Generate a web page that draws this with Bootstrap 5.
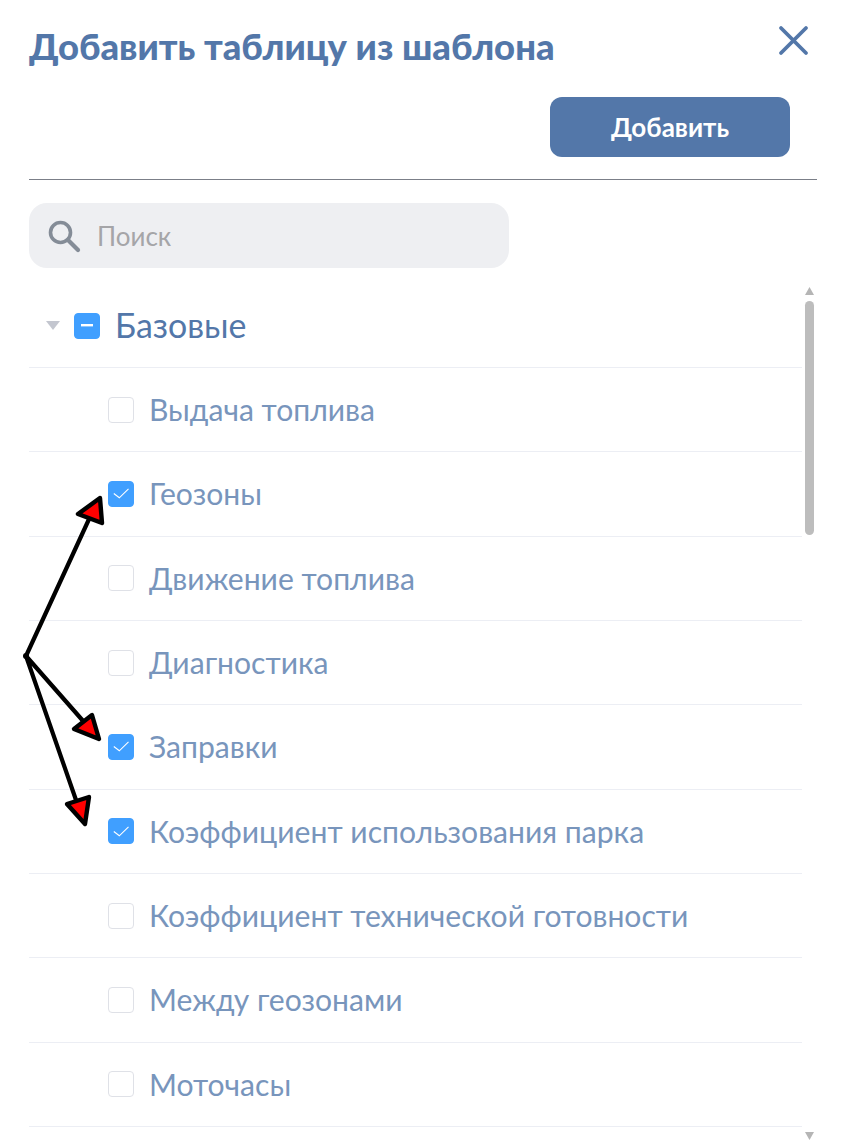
<!DOCTYPE html>
<html lang="ru">
<head>
  <meta charset="UTF-8" />
  <meta name="viewport" content="width=device-width, initial-scale=1.0"/>
  <title>Добавить таблицу из шаблона</title>
  <link href="https://cdn.jsdelivr.net/npm/bootstrap@5.3.0/dist/css/bootstrap.min.css" rel="stylesheet">
  <style>
    html, body { height: 1140px; overflow: hidden; }
    body { font-family: Lato, "Open Sans", sans-serif; background: #fff; position: relative; }
    .panel-wrap { padding: 0 30px 0 29px; }
    .head-row { height: 97px; }
    .panel-title { font-size: 36.4px; font-weight: 900; color: #5377a9; line-height: 1; margin: 28px 0 0; }
    .close-x { margin-top: 25px; margin-right: 7px; width: 32px; height: 32px; background: none; border: 0; padding: 0; }
    .add-row { padding-right: 27px; }
    .btn-add { width: 240px; height: 60px; background: #5377a9; color: #fff; font-size: 26px; font-weight: 700; border: 0; border-radius: 12px; padding: 0; }
    .sep-line { height: 1px; background: #7b7f88; margin: 22px 0 23px; }
    .search-box { width: 480px; height: 65px; background: #eeeff2; border-radius: 18px; padding-left: 18px; }
    .search-text { font-size: 26px; color: #a5a5a8; margin-left: 16px; padding-top: 2px; }
    .tree { margin-top: 16px; width: 773px; }
    .tree-row { height: 84.33px; border-bottom: 1px solid #eceef4; }
    .tree-row.parent { height: 84px; font-size: 33.9px; color: #5377a9; padding-left: 17px; }
    .tree-row.child { font-size: 30.1px; color: #7895bc; padding-left: 79px; }
    .caret-down { width: 0; height: 0; border-left: 7px solid transparent; border-right: 7px solid transparent; border-top: 9px solid #c3c6cf; margin-right: 14px; }
    .box { width: 26px; height: 26px; border-radius: 4px; border: 1px solid #dfe1e7; background: #fff; flex: none; margin-right: 15px; }
    .box.on { background: #409fff; border-color: #409fff; }
    .scroll-track { position: absolute; left: 805px; top: 287px; width: 9px; height: 853px; }
    .scroll-thumb { position: absolute; left: 0; top: 14px; width: 9px; height: 234px; background: #bdbdbd; border-radius: 5px; }
    .arr { position: absolute; left: 0; width: 9px; height: 8px; fill: #b5b5b5; }
    .marks { position: absolute; left: 0; top: 0; pointer-events: none; }
  </style>
</head>
<body>
  <div class="panel-wrap">
    <div class="d-flex justify-content-between align-items-start head-row">
      <h1 class="panel-title">Добавить таблицу из шаблона</h1>
      <button class="close-x" aria-label="Закрыть">
        <svg width="32" height="32" viewBox="0 0 32 32"><path d="M3 3 28 28M28 3 3 28" stroke="#5377a9" stroke-width="3.8" stroke-linecap="round" fill="none"/></svg>
      </button>
    </div>
    <div class="d-flex justify-content-end add-row">
      <button class="btn btn-add">Добавить</button>
    </div>
    <div class="sep-line"></div>
    <div class="d-flex align-items-center search-box">
      <svg width="34" height="34" viewBox="0 0 34 34"><circle cx="13.5" cy="13.5" r="10" stroke="#848c97" stroke-width="3.6" fill="none"/><path d="M21 21 31 31" stroke="#848c97" stroke-width="4.2" stroke-linecap="round"/></svg>
      <span class="search-text">Поиск</span>
    </div>
    <div class="tree">
      <div class="d-flex align-items-center tree-row parent">
        <span class="caret-down"></span>
        <span class="box on d-flex align-items-center justify-content-center">
          <svg width="12" height="3" viewBox="0 0 12 3"><rect width="12" height="2.4" fill="#fff"/></svg>
        </span>
        <span>Базовые</span>
      </div>
      <div class="d-flex align-items-center tree-row child"><span class="box"></span><span>Выдача топлива</span></div>
      <div class="d-flex align-items-center tree-row child"><span class="box on d-flex align-items-center justify-content-center"><svg width="16" height="11" viewBox="0 0 16 11"><path d="M.8 5.5 6.3 9.8 15.5 .8" stroke="#fff" stroke-width="1.1" fill="none"/></svg></span><span>Геозоны</span></div>
      <div class="d-flex align-items-center tree-row child"><span class="box"></span><span>Движение топлива</span></div>
      <div class="d-flex align-items-center tree-row child"><span class="box"></span><span>Диагностика</span></div>
      <div class="d-flex align-items-center tree-row child"><span class="box on d-flex align-items-center justify-content-center"><svg width="16" height="11" viewBox="0 0 16 11"><path d="M.8 5.5 6.3 9.8 15.5 .8" stroke="#fff" stroke-width="1.1" fill="none"/></svg></span><span>Заправки</span></div>
      <div class="d-flex align-items-center tree-row child"><span class="box on d-flex align-items-center justify-content-center"><svg width="16" height="11" viewBox="0 0 16 11"><path d="M.8 5.5 6.3 9.8 15.5 .8" stroke="#fff" stroke-width="1.1" fill="none"/></svg></span><span>Коэффициент использования парка</span></div>
      <div class="d-flex align-items-center tree-row child"><span class="box"></span><span>Коэффициент технической готовности</span></div>
      <div class="d-flex align-items-center tree-row child"><span class="box"></span><span>Между геозонами</span></div>
      <div class="d-flex align-items-center tree-row child"><span class="box"></span><span>Моточасы</span></div>
    </div>
  </div>

  <div class="scroll-track">
    <svg class="arr" style="top:0" viewBox="0 0 9 8"><path d="M4.5 0 9 8H0z"/></svg>
    <div class="scroll-thumb"></div>
    <svg class="arr" style="top:845px" viewBox="0 0 9 8"><path d="M0 0H9L4.5 8z"/></svg>
  </div>

  <svg class="marks" width="847" height="1140" viewBox="0 0 847 1140">
    <g stroke="#000" stroke-width="4.2" stroke-linecap="round" fill="none">
      <path d="M26 656 90 517M26 656 84 722M26 656 76 800"/>
    </g>
    <g fill="#f00" stroke="#000" stroke-width="4.4" stroke-linejoin="round">
      <path d="M100 498 78 514 102 523z"/>
      <path d="M92 715 74 729 99 739z"/>
      <path d="M89 797 67 804 85 824z"/>
    </g>
    <circle cx="26" cy="656" r="3" fill="#000"/>
  </svg>
</body>
</html>
